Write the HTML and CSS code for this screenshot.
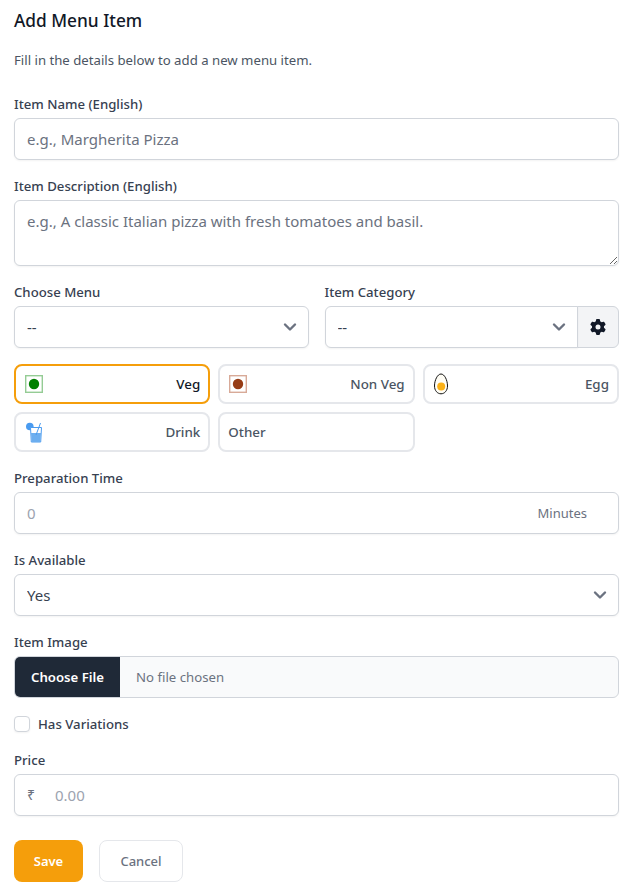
FILE: index.html
```html
<!DOCTYPE html>
<html lang="en">
<head>
<meta charset="utf-8">
<title>Add Menu Item</title>
<link rel="stylesheet" href="styles.css">
</head>
<body>
<form class="panel">
  <h1 class="title">Add Menu Item</h1>
  <p class="subtitle">Fill in the details below to add a new menu item.</p>

  <div class="field">
    <label class="label">Item Name (English)</label>
    <input class="control" type="text" placeholder="e.g., Margherita Pizza">
  </div>

  <div class="field">
    <label class="label">Item Description (English)</label>
    <textarea class="control area" placeholder="e.g., A classic Italian pizza with fresh tomatoes and basil."></textarea>
  </div>

  <div class="two-col">
    <div>
      <label class="label">Choose Menu</label>
      <div class="select-wrap">
        <select class="control select"><option>--</option></select>
        <svg class="chev" viewBox="0 0 20 20"><path d="M5 7.500l5 5 5-5" fill="none" stroke="#6b7280" stroke-width="2.400" stroke-linecap="round" stroke-linejoin="round"/></svg>
      </div>
    </div>
    <div>
      <label class="label">Item Category</label>
      <div class="joined">
        <div class="select-wrap grow">
          <select class="control select left"><option>--</option></select>
          <svg class="chev" viewBox="0 0 20 20"><path d="M5 7.500l5 5 5-5" fill="none" stroke="#6b7280" stroke-width="2.400" stroke-linecap="round" stroke-linejoin="round"/></svg>
        </div>
        <button type="button" class="gear-btn" aria-label="Settings">
          <svg width="16" height="16" viewBox="0 0 512 512"><path fill="#111827" d="M495.900 166.600c3.200 8.700.5 18.400-6.400 24.600l-43.300 39.400c1.100 8.300 1.700 16.800 1.700 25.400s-.6 17.100-1.700 25.400l43.300 39.400c6.900 6.200 9.600 15.900 6.400 24.600-4.400 11.900-9.700 23.300-15.800 34.300l-4.700 8.100c-6.600 11-14 21.400-22.100 31.200-5.900 7.200-15.700 9.600-24.500 6.800l-55.700-17.700c-13.400 10.300-28.200 18.900-44 25.400l-12.500 57.100c-2 9.100-9 16.300-18.200 17.800-13.800 2.300-28 3.500-42.500 3.500s-28.700-1.200-42.500-3.500c-9.200-1.500-16.200-8.700-18.200-17.800l-12.500-57.100c-15.800-6.500-30.600-15.100-44-25.400l-55.600 17.800c-8.800 2.800-18.600.3-24.500-6.800-8.100-9.800-15.500-20.200-22.100-31.200l-4.700-8.100c-6.100-11-11.400-22.400-15.800-34.300-3.200-8.700-.5-18.400 6.400-24.600l43.300-39.400c-1.100-8.400-1.700-16.900-1.700-25.500s.6-17.100 1.700-25.400l-43.300-39.400c-6.900-6.200-9.600-15.900-6.400-24.600 4.400-11.900 9.700-23.300 15.800-34.300l4.700-8.100c6.600-11 14-21.400 22.100-31.200 5.900-7.200 15.700-9.600 24.500-6.800l55.700 17.700c13.400-10.300 28.200-18.900 44-25.400l12.500-57.100c2-9.100 9-16.300 18.200-17.800C227.300 1.200 241.500 0 256 0s28.700 1.200 42.500 3.500c9.200 1.500 16.200 8.700 18.200 17.800l12.500 57.100c15.800 6.500 30.600 15.100 44 25.400l55.700-17.700c8.800-2.800 18.600-.3 24.500 6.800 8.100 9.800 15.500 20.200 22.100 31.200l4.700 8.100c6.100 11 11.400 22.400 15.800 34.300zM256 336a80 80 0 1 0 0-160 80 80 0 1 0 0 160z"/></svg>
        </button>
      </div>
    </div>
  </div>

  <div class="chips">
    <div class="chip chip-active">
      <svg class="chip-icon" width="18" height="18" viewBox="0 0 18 18"><rect x=".7" y=".7" width="16.600" height="16.600" fill="#fff" stroke="#95cc95" stroke-width="1.400"/><circle cx="9" cy="9" r="5.200" fill="#008000"/></svg>
      <span>Veg</span>
    </div>
    <div class="chip">
      <svg class="chip-icon" width="18" height="18" viewBox="0 0 18 18"><rect x=".7" y=".7" width="16.600" height="16.600" fill="#fff" stroke="#d8aa98" stroke-width="1.400"/><circle cx="9" cy="9" r="5.200" fill="#973c15"/></svg>
      <span>Non Veg</span>
    </div>
    <div class="chip">
      <svg class="chip-icon egg" width="16" height="22" viewBox="1 0 16 22"><path d="M8 1C4.500 1 1.500 7.200 1.500 13c0 4.500 2.800 7.800 6.500 7.800s6.500-3.300 6.500-7.800C14.500 7.200 11.500 1 8 1z" fill="#fffdf5" stroke="#111" stroke-width="1"/><circle cx="8.200" cy="13.500" r="4" fill="#fbb117"/></svg>
      <span>Egg</span>
    </div>
    <div class="chip">
      <svg class="chip-icon" width="18" height="22" viewBox="0 0 18 22"><circle cx="4.800" cy="5.500" r="3.800" fill="#4a9bf0"/><path d="M5.500 6.500h11l-.8 14.500H6.300z" fill="#fff" stroke="#4a9bf0" stroke-width="1"/><path d="M6 12h10l-.7 9H6.700z" fill="#6caeef"/><path d="M15.500 2L11 14" stroke="#4a9bf0" stroke-width="1" fill="none"/></svg>
      <span>Drink</span>
    </div>
    <div class="chip chip-start"><span>Other</span></div>
  </div>

  <div class="field">
    <label class="label">Preparation Time</label>
    <div class="suffixed">
      <input class="control lighter" type="text" placeholder="0">
      <span class="suffix">Minutes</span>
    </div>
  </div>

  <div class="field">
    <label class="label">Is Available</label>
    <div class="select-wrap">
      <select class="control select"><option>Yes</option></select>
      <svg class="chev" viewBox="0 0 20 20"><path d="M5 7.500l5 5 5-5" fill="none" stroke="#6b7280" stroke-width="2.400" stroke-linecap="round" stroke-linejoin="round"/></svg>
    </div>
  </div>

  <div class="field">
    <label class="label">Item Image</label>
    <div class="file">
      <span class="file-btn">Choose File</span>
      <span class="file-name">No file chosen</span>
    </div>
  </div>

  <label class="check">
    <span class="box"></span>
    <span>Has Variations</span>
  </label>

  <div class="field">
    <label class="label">Price</label>
    <div class="prefixed">
      <span class="prefix">₹</span>
      <input class="control lighter price" type="text" placeholder="0.00">
    </div>
  </div>

  <div class="actions">
    <button type="button" class="btn btn-save">Save</button>
    <button type="button" class="btn btn-cancel">Cancel</button>
  </div>
</form>
</body>
</html>
```
FILE: styles.css
```css
* { box-sizing: border-box; }
html, body { margin: 0; background: #fff; }
body { font-family: "Noto Sans", sans-serif; color: #111827; }
.panel { width: 605px; margin-left: 14px; padding-top: 9px; }
.title { margin: 0; font-size: 17.300px; line-height: 24px; font-weight: 500; color: #111827; }
.subtitle { margin: 17px 0 0; font-size: 13.200px; line-height: 20px; color: #4b5563; }
.field { margin-top: 16px; }
.subtitle + .field { margin-top: 24px; }
.label { display: block; margin-bottom: 4px; font-size: 13.200px; line-height: 20px; font-weight: 500; color: #374151; }
.control { display: block; width: 100%; height: 42px; padding: 0 12px; border: 1px solid #d1d5db; border-radius: 6px; background: #fff; font: 15px/20px "Noto Sans", sans-serif; color: #374151; box-shadow: 0 1px 2px rgba(0,0,0,.05); outline: none; }
.control::placeholder { color: #6b7280; opacity: 1; }
.lighter::placeholder { color: #9ca3af; }
.area { height: 66px; padding-top: 10px; resize: vertical; }
.two-col { display: grid; grid-template-columns: 1fr 1fr; gap: 16px; margin-top: 16px; }
.select-wrap { position: relative; }
.select { appearance: none; -webkit-appearance: none; padding-right: 36px; }
.chev { position: absolute; right: 9px; top: 11px; width: 20px; height: 20px; pointer-events: none; }
.joined { display: flex; }
.grow { flex: 1; min-width: 0; }
.left { border-radius: 6px 0 0 6px; }
.gear-btn { display: flex; align-items: center; justify-content: center; width: 42px; height: 42px; margin-left: -1px; flex: none; padding: 0; border: 1px solid #d1d5db; border-radius: 0 6px 6px 0; background: #f3f4f6; }
.chips { display: grid; grid-template-columns: repeat(3, 1fr); gap: 8px; margin-top: 16px; }
.chip { display: flex; align-items: center; justify-content: space-between; height: 40px; padding: 0 8px 0 9px; border: 2px solid #e5e7eb; border-radius: 8px; background: #fff; font-size: 13.400px; font-weight: 500; color: #4b5563; }
.chip-active { border-color: #f59e0b; color: #111827; }
.chip-start { justify-content: flex-start; padding-left: 8px; }
.suffixed, .prefixed { position: relative; }
.suffix { position: absolute; right: 32px; top: 11px; font-size: 13px; line-height: 20px; color: #6b7280; }
.prefix { position: absolute; left: 13px; top: 11px; font-size: 14px; line-height: 20px; color: #6b7280; }
.price { padding-left: 40px; }
.file { display: flex; align-items: center; height: 42px; border: 1px solid #d1d5db; border-radius: 6px; background: #f9fafb; overflow: hidden; }
.file-btn { display: flex; align-items: center; height: 100%; padding: 0 16px; background: #1f2937; color: #fff; font-size: 13.200px; font-weight: 600; }
.file-name { margin-left: 16px; font-size: 13.200px; color: #6b7280; }
.check { display: flex; align-items: center; gap: 8px; height: 20px; margin-top: 16px; font-size: 13.200px; font-weight: 500; color: #374151; }
.box { width: 16px; height: 16px; border: 1px solid #d1d5db; border-radius: 4px; background: #fff; box-shadow: 0 1px 2px rgba(0,0,0,.05); }
.actions { display: flex; gap: 16px; margin-top: 24px; }
.btn { height: 42px; border-radius: 8px; font: 500 13px "Noto Sans", sans-serif; }
.btn-save { width: 69px; border: 0; background: #f59e0b; color: #fff; font-weight: 600; }
.btn-cancel { width: 84px; border: 1px solid #e5e7eb; background: #fff; color: #6b7280; }
```
